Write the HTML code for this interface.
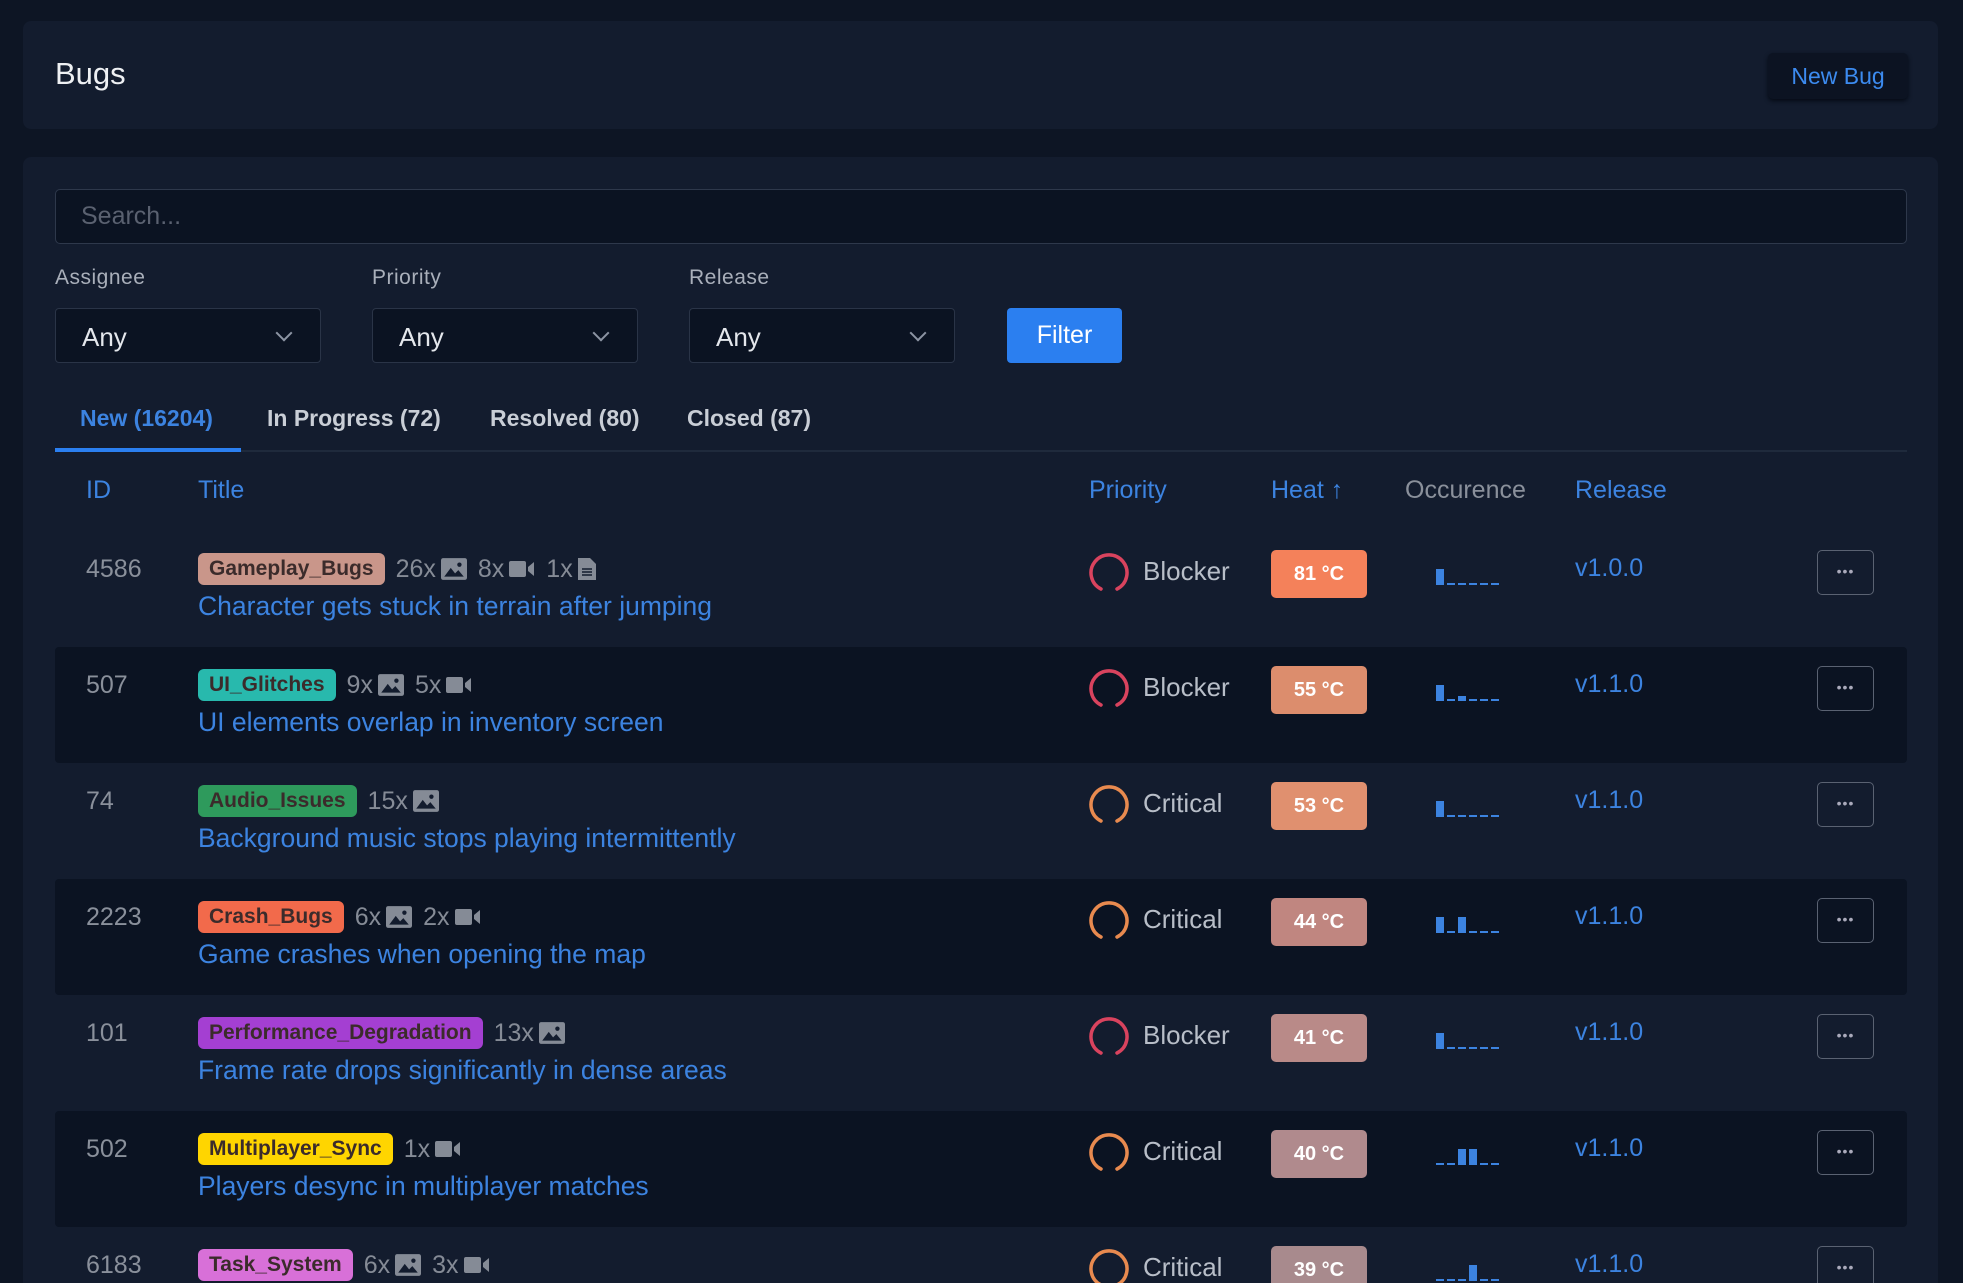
<!DOCTYPE html>
<html style="overflow:hidden"><head><meta charset="utf-8"><style>
*{box-sizing:border-box;margin:0;padding:0}
body{width:1963px;height:1283px;background:#0d1524;font-family:"Liberation Sans",sans-serif;position:relative;overflow:hidden;color:#c8ccd4}
.a{position:absolute}
.card{background:#131c2e;border-radius:8px}
.sel{border:1px solid #2a3447;background:#0b1322;border-radius:4px;height:55px;top:308px}
.sel span{position:absolute;left:26px;top:13px;font-size:26px;color:#e4e7ec}
.sel i{position:absolute;right:30px;top:18px;width:12px;height:12px;border-right:2px solid #8c94a3;border-bottom:2px solid #8c94a3;transform:rotate(45deg)}
.lbl{top:266px;font-size:21px;color:#a9afba;letter-spacing:.5px}
.tab{top:405px;font-size:23px;font-weight:bold;color:#c9ced6}
.th{top:476px;font-size:25px;color:#3c83e0}
.row{left:55px;width:1852px;height:116px}
.dark{background:#0b1322}
.id{left:31px;font-size:25px;color:#8a909b}
.tag{height:32px;border-radius:6px;font-size:21px;font-weight:bold;color:#3b2b2b;padding:4px 11px 0 11px}
.cnt{font-size:25px;color:#858b96}
.ttl{font-size:26.5px;color:#3c83e0}
.pr{font-size:26px;color:#b8bec8}
.heat{width:96px;height:48px;border-radius:5px;color:#fff;font-weight:bold;font-size:20px;text-align:center;line-height:48px}
.rel{font-size:25px;color:#3c83e0}
.menu{width:57px;height:45px;border:1px solid #5a6272;border-radius:5px;color:#aab;font-size:14px;text-align:center;line-height:40px;letter-spacing:1px}
</style></head><body>
<div class="a card" style="left:23px;top:21px;width:1915px;height:108px"></div>
<div class="a" style="left:55px;top:56px;font-size:31px;color:#eef0f3">Bugs</div>
<div class="a" style="left:1768px;top:53px;width:140px;height:46px;background:#0c1322;border-radius:5px;color:#3c8bf0;font-size:23px;text-align:center;line-height:46px;box-shadow:0 2px 4px #050a14">New Bug</div>
<div class="a card" style="left:23px;top:157px;width:1915px;height:1126px;border-radius:8px 8px 0 0"></div>
<div class="a" style="left:55px;top:189px;width:1852px;height:55px;border:1px solid #2e384b;border-radius:5px;background:#0b1322"></div>
<div class="a" style="left:81px;top:202px;font-size:25px;color:#5a6170">Search...</div>
<div class="a lbl" style="left:55px">Assignee</div>
<div class="a lbl" style="left:372px">Priority</div>
<div class="a lbl" style="left:689px">Release</div>
<div class="a sel" style="left:55px;width:266px"><span>Any</span><i></i></div>
<div class="a sel" style="left:372px;width:266px"><span>Any</span><i></i></div>
<div class="a sel" style="left:689px;width:266px"><span>Any</span><i></i></div>
<div class="a" style="left:1007px;top:308px;width:115px;height:55px;background:#2b7ff0;border-radius:4px;color:#fff;font-size:25px;text-align:center;line-height:55px">Filter</div>
<div class="a tab" style="left:80px;color:#3c83e0">New (16204)</div>
<div class="a tab" style="left:267px">In Progress (72)</div>
<div class="a tab" style="left:490px">Resolved (80)</div>
<div class="a tab" style="left:687px">Closed (87)</div>
<div class="a" style="left:55px;top:450px;width:1852px;height:2px;background:#1f2a3c"></div>
<div class="a" style="left:55px;top:448px;width:186px;height:4px;background:#2b7ff0"></div>
<div class="a th" style="left:86px">ID</div>
<div class="a th" style="left:198px">Title</div>
<div class="a th" style="left:1089px">Priority</div>
<div class="a th" style="left:1271px">Heat ↑</div>
<div class="a th" style="left:1405px;color:#8a909b">Occurence</div>
<div class="a th" style="left:1575px">Release</div>

<svg width="0" height="0" style="position:absolute"><defs>
<symbol id="img" viewBox="0 0 24 20"><rect width="24" height="20" rx="2" fill="#858b96"/><path d="M3 17l6-8 4 5 3-3 5 6z" fill="#131c2e"/><circle cx="17" cy="6" r="2" fill="#131c2e"/></symbol>
<symbol id="vid" viewBox="0 0 26 20"><rect x="0" y="2" width="17" height="16" rx="2" fill="#858b96"/><path d="M19 8l6-5v14l-6-5z" fill="#858b96"/></symbol>
<symbol id="doc" viewBox="0 0 18 22"><path d="M0 0h12l6 6v16H0z" fill="#858b96"/><path d="M4 11h10M4 14h10M4 17h10" stroke="#131c2e" stroke-width="1.5"/></symbol>
</defs></svg>

<div class="a row" style="top:531px"></div>
<div class="a row dark" style="top:647px;border-radius:4px"></div>
<div class="a row" style="top:763px"></div>
<div class="a row dark" style="top:879px;border-radius:4px"></div>
<div class="a row" style="top:995px"></div>
<div class="a row dark" style="top:1111px;border-radius:4px"></div>
<div class="a row" style="top:1227px"></div>

<div id="rows"></div>
<script>
const R=[
["4586","Gameplay_Bugs","#c9968a",[["26x","img"],["8x","vid"],["1x","doc"]],"Character gets stuck in terrain after jumping","Blocker","81 °C","#f4815a","v1.0.0",[16,0,0,0,0,0]],
["507","UI_Glitches","#28b9ad",[["9x","img"],["5x","vid"]],"UI elements overlap in inventory screen","Blocker","55 °C","#dc8d6d","v1.1.0",[16,0,5,0,0,0]],
["74","Audio_Issues","#2e9a5c",[["15x","img"]],"Background music stops playing intermittently","Critical","53 °C","#e0906f","v1.1.0",[16,0,0,0,0,0]],
["2223","Crash_Bugs","#f26a4b",[["6x","img"],["2x","vid"]],"Game crashes when opening the map","Critical","44 °C","#c08680","v1.1.0",[16,0,16,0,0,0]],
["101","Performance_Degradation","#a43fd2",[["13x","img"]],"Frame rate drops significantly in dense areas","Blocker","41 °C","#b98a88","v1.1.0",[16,0,0,0,0,0]],
["502","Multiplayer_Sync","#ffd500",[["1x","vid"]],"Players desync in multiplayer matches","Critical","40 °C","#b08a8d","v1.1.0",[0,0,16,16,0,0]],
["6183","Task_System","#d870d8",[["6x","img"],["3x","vid"]],"","Critical","39 °C","#a88a8d","v1.1.0",[0,0,0,16,0,0]]];
let h="";
R.forEach((r,i)=>{const t=531+i*116;
h+=`<div class="a id" style="left:86px;top:${t+24}px">${r[0]}</div>`;
h+=`<div class="a" style="left:198px;top:${t+22}px;display:flex;align-items:center;gap:5px"><span class="tag" style="background:${r[2]};display:inline-block">${r[1]}</span>`;
r[3].forEach(c=>{h+=`<span class="cnt" style="margin-left:6px">${c[0]}</span><svg width="${c[1]=='doc'?18:26}" height="22"><use href="#${c[1]}"/></svg>`});
h+=`</div>`;
if(r[4])h+=`<div class="a ttl" style="left:198px;top:${t+60}px">${r[4]}</div>`;
const col=r[5]=="Blocker"?"#d9435e":"#e88a4f";
h+=`<svg class="a" style="left:1088px;top:${t+20}px" width="42" height="42"><path d="M13 38A18 18 0 1 1 29 38" fill="none" stroke="${col}" stroke-width="3.5" stroke-linecap="round"/></svg>`;
h+=`<div class="a pr" style="left:1143px;top:${t+25}px">${r[5]}</div>`;
h+=`<div class="a heat" style="left:1271px;top:${t+19}px;background:${r[7]}">${r[6]}</div>`;
let s=`<svg class="a" style="left:1436px;top:${t+31}px" width="66" height="24">`;
r[9].forEach((v,k)=>{const x=k*11;if(v)s+=`<rect x="${x}" y="${23-v}" width="8" height="${v}" fill="#3c83e0"/>`;else s+=`<rect x="${x}" y="21" width="8" height="2" fill="#3c83e0"/>`});
h+=s+`</svg>`;
h+=`<div class="a rel" style="left:1575px;top:${t+23}px">${r[8]}</div>`;
h+=`<div class="a menu" style="left:1817px;top:${t+19}px">•••</div>`;
});
document.getElementById("rows").innerHTML=h;
</script>
</body></html>
